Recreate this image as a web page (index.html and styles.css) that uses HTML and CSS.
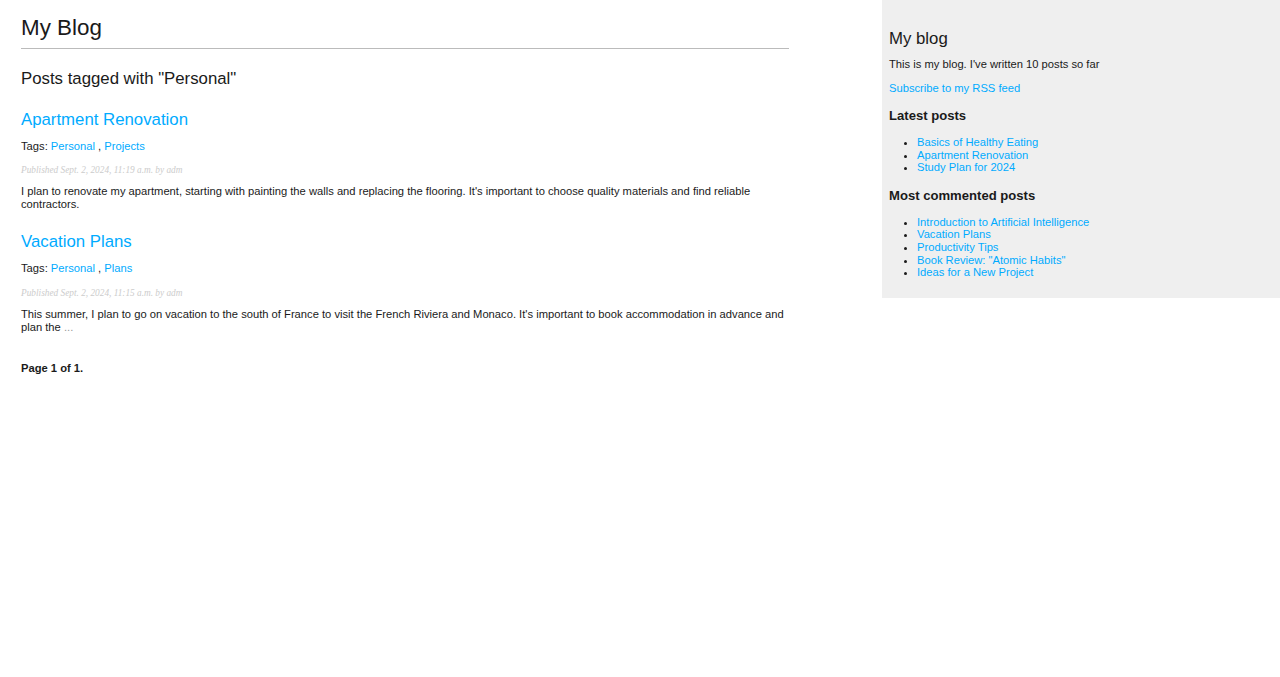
FILE: index.html
```html
<!DOCTYPE html>
<html>
<head>
<meta charset="utf-8">
<title>Posts tagged with "Personal"</title>
<link rel="stylesheet" href="styles.css">
</head>
<body>
<div class="page">
  <div class="content">
    <h1 class="site-title">My Blog</h1>
    <h2 class="tag-title">Posts tagged with "Personal"</h2>

    <h2 class="post-title"><a href="#">Apartment Renovation</a></h2>
    <p class="tags">Tags: <a href="#">Personal</a> , <a href="#">Projects</a></p>
    <p class="date">Published Sept. 2, 2024, 11:19 a.m. by adm</p>
    <p class="body">I plan to renovate my apartment, starting with painting the walls and replacing the flooring. It's important to choose quality materials and find reliable contractors.</p>

    <h2 class="post-title"><a href="#">Vacation Plans</a></h2>
    <p class="tags">Tags: <a href="#">Personal</a> , <a href="#">Plans</a></p>
    <p class="date">Published Sept. 2, 2024, 11:15 a.m. by adm</p>
    <p class="body">This summer, I plan to go on vacation to the south of France to visit the French Riviera and Monaco. It's important to book accommodation in advance and plan the <span class="ellipsis">...</span></p>

    <div class="pagination">
      <span class="current">Page 1 of 1.</span>
    </div>
  </div>

  <div class="sidebar">
    <h2 class="side-title">My blog</h2>
    <p class="side-text">This is my blog. I've written 10 posts so far</p>
    <p class="side-text"><a href="#">Subscribe to my RSS feed</a></p>
    <h3 class="side-head">Latest posts</h3>
    <ul class="side-list">
      <li><a href="#">Basics of Healthy Eating</a></li>
      <li><a href="#">Apartment Renovation</a></li>
      <li><a href="#">Study Plan for 2024</a></li>
    </ul>
    <h3 class="side-head">Most commented posts</h3>
    <ul class="side-list commented">
      <li><a href="#">Introduction to Artificial Intelligence</a></li>
      <li><a href="#">Vacation Plans</a></li>
      <li><a href="#">Productivity Tips</a></li>
      <li><a href="#">Book Review: "Atomic Habits"</a></li>
      <li><a href="#">Ideas for a New Project</a></li>
    </ul>
  </div>
</div>
</body>
</html>
```

FILE: styles.css
```css
html, body {
  margin: 0;
  padding: 0;
}

body {
  font-family: "Liberation Sans", Arial, Helvetica, sans-serif;
  font-size: 11.2px;
  color: #1a1a1a;
  background: #fff;
}

a {
  color: #00abff;
  text-decoration: none;
}

.page {
  display: flex;
  justify-content: space-between;
  align-items: flex-start;
}

.content {
  width: 768px;
  padding: 0 0 0 21px;
}

.site-title {
  font-size: 22.4px;
  font-weight: normal;
  margin: 15px 0 15px;
  padding: 0 0 7px 0;
  border-bottom: 1px solid #bbb;
}

.tag-title,
.post-title {
  font-size: 16.8px;
  font-weight: normal;
  margin: 21px 0 0;
}

.tag-title {
  margin-top: 20px;
}

.tags {
  margin: 10px 0 12.2px;
  line-height: 13px;
}

.body {
  margin: 10.2px 0 11.2px;
  line-height: 13px;
}

.date {
  color: #ccc;
  font-family: "Liberation Serif", Georgia, serif;
  font-size: 9.3px;
  line-height: 10px;
  font-style: italic;
  margin: 8.4px 0;
}

.ellipsis {
  color: #999;
}

.pagination {
  margin: 28px 0;
  font-weight: bold;
}

.sidebar {
  width: 384px;
  padding: 7px;
  background: #efefef;
}

.side-title {
  font-size: 16.8px;
  font-weight: normal;
  margin: 22px 0 0;
}

.side-text {
  margin: 9px 0 12px;
}

.side-head {
  font-size: 13.1px;
  font-weight: bold;
  margin: 14px 0 13px;
}

.side-list {
  margin: 12px 0;
  padding-left: 28px;
  line-height: 12.6px;
}

.side-list.commented {
  margin-top: 13px;
}
```
